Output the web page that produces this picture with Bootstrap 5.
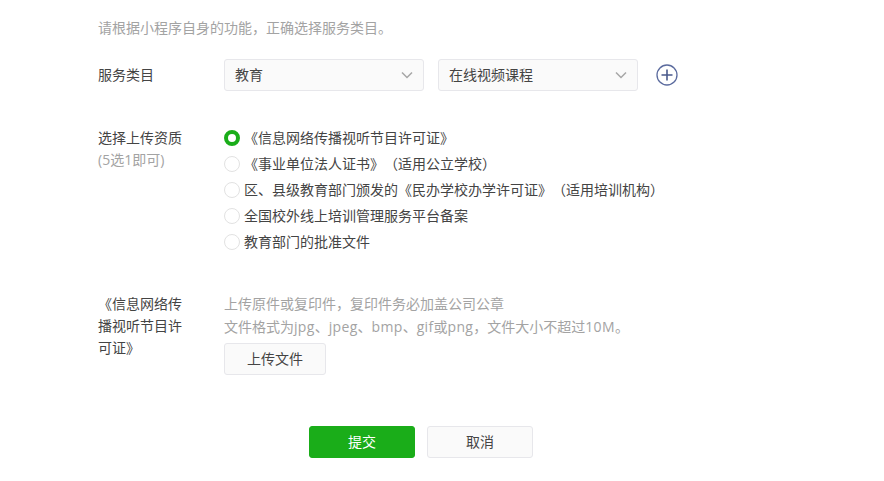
<!DOCTYPE html>
<html lang="zh-CN">
<head>
<meta charset="utf-8">
<title>服务类目</title>
<link rel="stylesheet" href="https://cdn.jsdelivr.net/npm/bootstrap@5.3.0/dist/css/bootstrap.min.css">
<style>
body{font-family:"Open Sans","Noto Sans CJK SC",sans-serif;font-size:14px;color:#444;background:#fff;line-height:26px;overflow:hidden;text-spacing-trim:space-all;font-kerning:none}
.page-wrap{padding:15px 0 0 98px;height:481px}
.hint-text{color:#a3a3a3}
.latin-run{letter-spacing:.33px}
.form-line{display:flex}
.line-label{width:126px;flex:none;line-height:22px}
.label-shift{padding-top:2px}
.fake-select{width:200px;height:32px;border:1px solid #e7e7eb;border-radius:3px;background:#fafafa;padding:0 10px;line-height:30px;display:flex;justify-content:space-between;align-items:center}
.gap-second{margin-left:14px}
.gap-plus{margin-left:17px}
.line-one{margin-top:18px}
.line-two{margin-top:34px}
.line-three{margin-top:36px}
.radio-row{height:26px;display:flex;align-items:center;gap:4px}
.radio-dot{width:16px;height:16px;border-radius:50%;border:1px solid #e2e2e2;background:#fff;flex:none}
.radio-dot.is-on{border:4px solid #1aad19}
.label-three{width:92px}
.upload-col{padding-top:1px}
.upload-hint{line-height:23px}
.file-btn,.plain-btn{display:block;border:1px solid #e7e7eb;border-radius:3px;background:#fafafa;text-align:center}
.file-btn{width:102px;height:32px;line-height:30px;margin-top:5px}
.action-bar{display:flex;gap:12px;margin:51px 0 0 211px}
.plain-btn,.main-btn{width:106px;height:32px;line-height:30px;border-radius:3px;text-align:center}
.main-btn{background:#1aad19;color:#fff;border:1px solid #1aad19}
</style>
</head>
<body>
<div class="page-wrap">
  <div class="hint-text">请根据小程序自身的功能，正确选择服务类目。</div>

  <div class="form-line line-one align-items-center">
    <div class="line-label">服务类目</div>
    <div class="fake-select"><span>教育</span><svg width="12" height="8" viewBox="0 0 12 8"><path d="M1 1.5 6 6.5 11 1.5" fill="none" stroke="#a6a6a6" stroke-width="1.5"/></svg></div>
    <div class="fake-select gap-second"><span>在线视频课程</span><svg width="12" height="8" viewBox="0 0 12 8"><path d="M1 1.5 6 6.5 11 1.5" fill="none" stroke="#a6a6a6" stroke-width="1.5"/></svg></div>
    <svg class="gap-plus" width="24" height="24" viewBox="0 0 24 24"><circle cx="12" cy="12" r="10" fill="none" stroke="#5b6b9e" stroke-width="1.3"/><path d="M12 6.5v11M6.5 12h11" stroke="#4a5a8c" stroke-width="1.6"/></svg>
  </div>

  <div class="form-line line-two">
    <div class="line-label label-shift">选择上传资质<div class="hint-text">(5选1即可)</div></div>
    <div>
      <div class="radio-row"><span class="radio-dot is-on"></span><span>《信息网络传播视听节目许可证》</span></div>
      <div class="radio-row"><span class="radio-dot"></span><span>《事业单位法人证书》（适用公立学校）</span></div>
      <div class="radio-row"><span class="radio-dot"></span><span>区、县级教育部门颁发的《民办学校办学许可证》（适用培训机构）</span></div>
      <div class="radio-row"><span class="radio-dot"></span><span>全国校外线上培训管理服务平台备案</span></div>
      <div class="radio-row"><span class="radio-dot"></span><span>教育部门的批准文件</span></div>
    </div>
  </div>

  <div class="form-line line-three">
    <div class="line-label label-shift"><div class="label-three">《信息网络传播视听节目许可证》</div></div>
    <div class="upload-col">
      <div class="hint-text upload-hint">上传原件或复印件，复印件务必加盖公司公章</div>
      <div class="hint-text upload-hint">文件格式为<span class="latin-run">jpg</span>、<span class="latin-run">jpeg</span>、<span class="latin-run">bmp</span>、<span class="latin-run">gif</span>或<span class="latin-run">png</span>，文件大小不超过<span class="latin-run">10M</span>。</div>
      <div class="file-btn">上传文件</div>
    </div>
  </div>

  <div class="action-bar">
    <div class="main-btn">提交</div>
    <div class="plain-btn">取消</div>
  </div>
</div>
</body>
</html>
